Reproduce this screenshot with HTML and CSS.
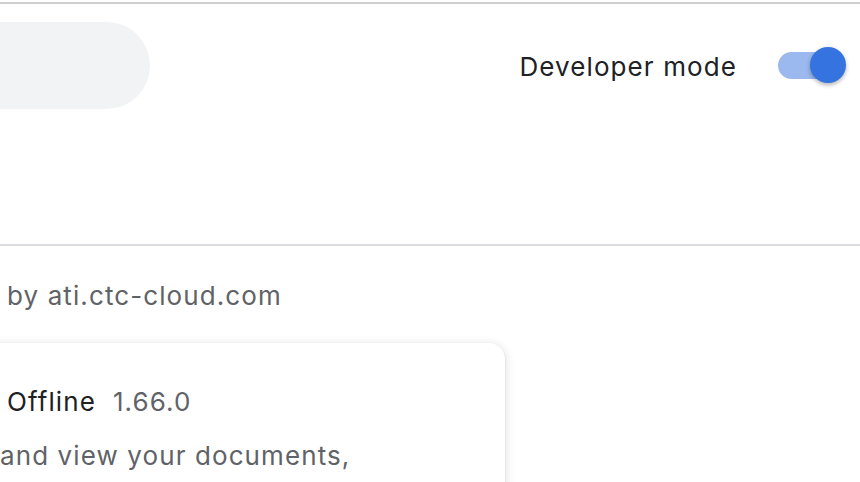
FILE: index.html
```html
<!DOCTYPE html>
<html>
<head>
<meta charset="utf-8">
<link rel="stylesheet" href="styles.css">
</head>
<body>
<div class="topline"></div>
<header class="toolbar">
  <div class="search"></div>
  <div class="dev">
    <span class="dev-label">Developer mode</span>
    <span class="toggle"><span class="track"></span><span class="knob"></span></span>
  </div>
</header>
<main class="content">
  <div class="managed">by ati.ctc-cloud.com</div>
  <div class="card">
    <div class="title-row"><span class="name">Offline</span><span class="version">1.66.0</span></div>
    <div class="desc">and view your documents,</div>
  </div>
</main>
</body>
</html>
```
FILE: styles.css
```css
html, body {
  margin: 0;
  padding: 0;
  background: #ffffff;
  font-family: Inter, "Noto Sans", sans-serif;
  letter-spacing: 1.1px;
  overflow: hidden;
  height: 482px;
}
.topline {
  margin-top: 2px;
  height: 2px;
  background: #cfcfcf;
}
.toolbar {
  height: 240px;
  border-bottom: 2px solid #dadce0;
  display: flex;
  align-items: flex-start;
  justify-content: space-between;
}
.search {
  margin-top: 18px;
  margin-left: -150px;
  width: 300px;
  height: 87px;
  border-radius: 44px;
  background: #f1f3f4;
}
.dev {
  margin-top: 46px;
  display: flex;
  align-items: flex-start;
  gap: 41px;
  margin-right: 14px;
}
.dev-label {
  font-size: 26px;
  line-height: 31px;
  color: #202124;
  margin-top: 0.5px;
}
.toggle {
  position: relative;
  width: 68px;
  height: 36px;
  display: block;
  margin-top: -3px;
}
.track {
  position: absolute;
  left: 0;
  top: 5px;
  width: 60px;
  height: 27px;
  border-radius: 13.5px;
  background: #9bb9ee;
}
.knob {
  position: absolute;
  right: 0;
  top: 0;
  width: 36px;
  height: 36px;
  border-radius: 50%;
  background: #3573e0;
  box-shadow: 0 2px 4px rgba(0,0,0,0.3);
}
.content {
  padding-left: 7px;
}
.managed {
  margin-top: 34px;
  font-size: 26px;
  color: #5f6368;
}
.card {
  margin-top: 32px;
  margin-left: -60px;
  width: 558px;
  height: 200px;
  border-radius: 16px;
  background: #fff;
  box-shadow: 0 1px 2px rgba(60,64,67,0.2), 0 2px 8px 2px rgba(60,64,67,0.12);
  padding: 43px 0 0 60px;
  box-sizing: border-box;
}
.title-row {
  display: flex;
  gap: 17px;
  font-size: 26px;
}
.name { color: #202124; }
.version { color: #5f6368; }
.desc {
  margin-top: 23px;
  margin-left: -7px;
  font-size: 26px;
  color: #5f6368;
}
```
